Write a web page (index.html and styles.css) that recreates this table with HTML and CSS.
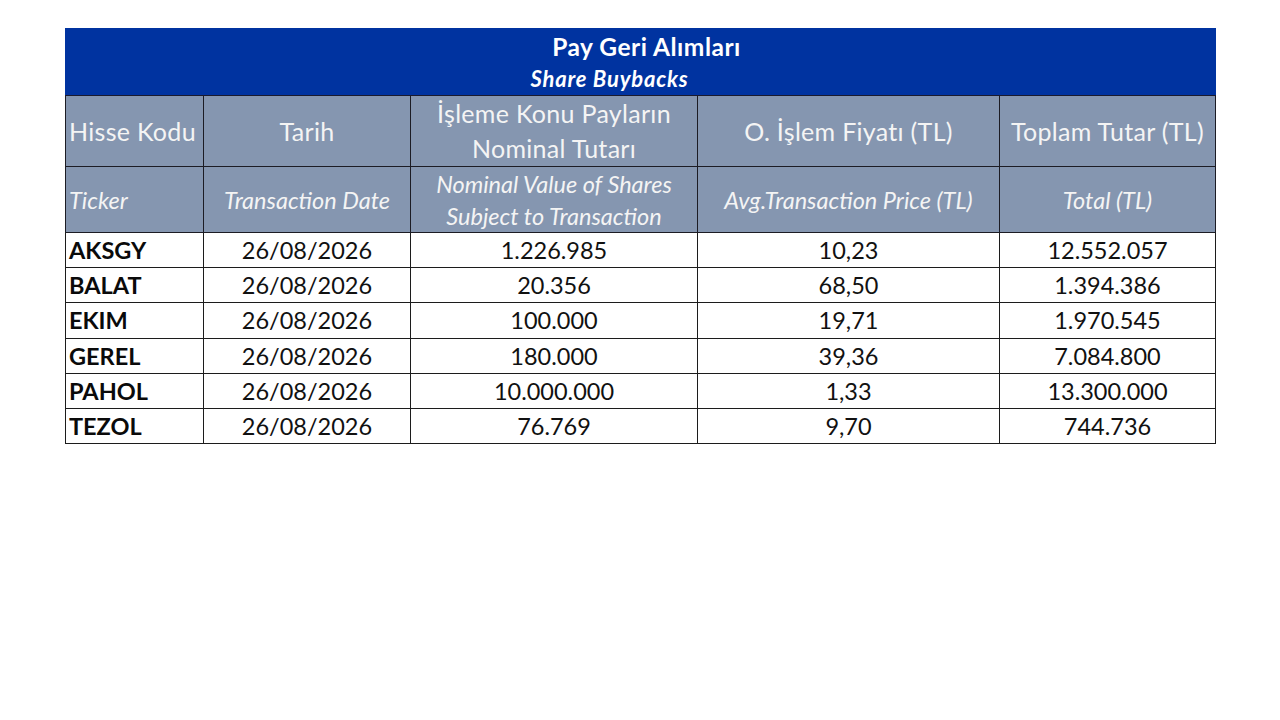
FILE: index.html
```html
<!DOCTYPE html>
<html lang="tr">
<head>
<meta charset="utf-8">
<link rel="stylesheet" href="styles.css">
</head>
<body>
<table class="buybacks">
  <colgroup>
    <col class="c1"><col class="c2"><col class="c3"><col class="c4"><col class="c5">
  </colgroup>
  <tr class="title-row">
    <th colspan="5">
      <div class="title-tr">Pay Geri Alımları</div>
      <div class="title-en">Share Buybacks</div>
    </th>
  </tr>
  <tr class="head-tr">
    <th class="left">Hisse Kodu</th>
    <th>Tarih</th>
    <th>İşleme Konu Payların<br>Nominal Tutarı</th>
    <th>O. İşlem Fiyatı (TL)</th>
    <th>Toplam Tutar (TL)</th>
  </tr>
  <tr class="head-en">
    <th class="left">Ticker</th>
    <th>Transaction Date</th>
    <th>Nominal Value of Shares<br>Subject to Transaction</th>
    <th>Avg.Transaction Price (TL)</th>
    <th>Total (TL)</th>
  </tr>
  <tr class="data"><td class="ticker">AKSGY</td><td>26/08/2026</td><td>1.226.985</td><td>10,23</td><td>12.552.057</td></tr>
  <tr class="data"><td class="ticker">BALAT</td><td>26/08/2026</td><td>20.356</td><td>68,50</td><td>1.394.386</td></tr>
  <tr class="data"><td class="ticker">EKIM</td><td>26/08/2026</td><td>100.000</td><td>19,71</td><td>1.970.545</td></tr>
  <tr class="data"><td class="ticker">GEREL</td><td>26/08/2026</td><td>180.000</td><td>39,36</td><td>7.084.800</td></tr>
  <tr class="data"><td class="ticker">PAHOL</td><td>26/08/2026</td><td>10.000.000</td><td>1,33</td><td>13.300.000</td></tr>
  <tr class="data"><td class="ticker">TEZOL</td><td>26/08/2026</td><td>76.769</td><td>9,70</td><td>744.736</td></tr>
</table>
</body>
</html>
```

FILE: styles.css
```css
html, body {
  margin: 0;
  padding: 0;
  background: #ffffff;
}
body {
  padding: 28px 0 0 65px;
  font-family: Lato, "Open Sans", sans-serif;
}
.buybacks {
  border-collapse: collapse;
  table-layout: fixed;
  width: 1150px;
}
.c1 { width: 138px; }
.c2 { width: 207px; }
.c3 { width: 287px; }
.c4 { width: 302px; }
.c5 { width: 216px; }

.title-row th {
  background: #0033a0;
  color: #ffffff;
  height: 66px;
  padding: 0;
  font-weight: 700;
  text-align: center;
  border: 1px solid #0033a0;
  border-bottom: 1px solid #1a1a2e;
}
.title-tr {
  font-size: 24.5px;
  letter-spacing: 0.5px;
  line-height: 32px;
  padding-left: 12px;
  padding-top: 2px;
}
.title-en {
  font-size: 22px;
  letter-spacing: 0.8px;
  font-style: italic;
  line-height: 32px;
  padding-right: 62px;
}

.head-tr th, .head-en th {
  background: #8596b0;
  color: #f4f4f4;
  font-weight: 400;
  text-align: center;
  border: 1px solid #1c1c24;
  padding: 0 2px;
}
.head-tr th {
  height: 70px;
  font-size: 25px;
  letter-spacing: 0.3px;
  line-height: 35px;
}
.head-en th {
  height: 65px;
  font-size: 23.5px;
  font-style: italic;
  line-height: 32px;
}
.buybacks th.left {
  text-align: left;
  padding-left: 3px;
}

.data td {
  height: 34.2px;
  padding: 0;
  border: 1px solid #1c1c1c;
  text-align: center;
  font-size: 23.5px;
  line-height: 34px;
  color: #111111;
}
.data td.ticker {
  text-align: left;
  padding-left: 3px;
  font-weight: 700;
  color: #0a0a0a;
}
```
